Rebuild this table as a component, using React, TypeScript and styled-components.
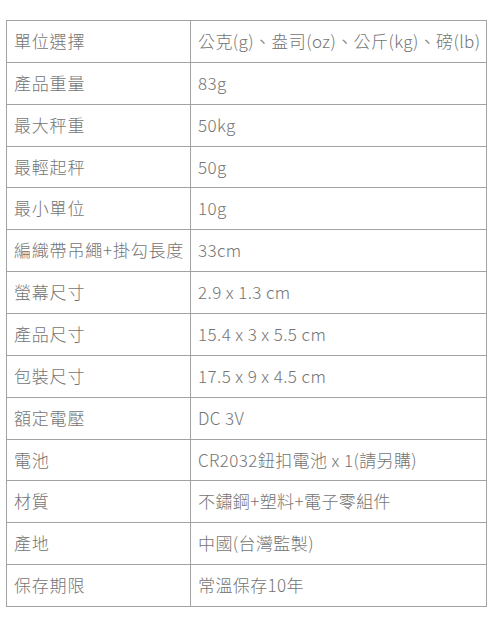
import React from 'react';
import styled, { createGlobalStyle } from 'styled-components';

const GlobalStyle = createGlobalStyle`
  html, body {
    margin: 0;
    padding: 0;
    background: #fff;
  }
  body {
    font-family: "Noto Sans CJK TC", "Noto Sans", sans-serif;
  }
`;

type Spec = { label: string; value: string };

const specs: Spec[] = [
  { label: '單位選擇', value: '公克(g)、盎司(oz)、公斤(kg)、磅(lb)' },
  { label: '產品重量', value: '83g' },
  { label: '最大秤重', value: '50kg' },
  { label: '最輕起秤', value: '50g' },
  { label: '最小單位', value: '10g' },
  { label: '編織帶吊繩+掛勾長度', value: '33cm' },
  { label: '螢幕尺寸', value: '2.9 x 1.3 cm' },
  { label: '產品尺寸', value: '15.4 x 3 x 5.5 cm' },
  { label: '包裝尺寸', value: '17.5 x 9 x 4.5 cm' },
  { label: '額定電壓', value: 'DC 3V' },
  { label: '電池', value: 'CR2032鈕扣電池 x 1(請另購)' },
  { label: '材質', value: '不鏽鋼+塑料+電子零組件' },
  { label: '產地', value: '中國(台灣監製)' },
  { label: '保存期限', value: '常溫保存10年' },
];

const Page = styled.main`
  padding: 20px 0 12px 6px;
`;

const SpecTable = styled.table`
  width: 481px;
  border-collapse: collapse;
  table-layout: fixed;
  border: 1px solid #a3a3a3;
`;

const Cell = styled.td<{ $label?: boolean }>`
  border: 1px solid #a3a3a3;
  padding: 10px 0 10px 7px;
  width: ${({ $label }) => ($label ? '184px' : 'auto')};
  box-sizing: border-box;
  font-size: 17px;
  letter-spacing: ${({ $label }) => ($label ? '0.8px' : '0.4px')};
  line-height: 20.86px;
  font-weight: 300;
  color: #747474;
  white-space: nowrap;
  vertical-align: middle;
`;

export default function App() {
  return (
    <Page>
      <GlobalStyle />
      <SpecTable>
        <tbody>
          {specs.map((s) => (
            <tr key={s.label}>
              <Cell $label>{s.label}</Cell>
              <Cell>{s.value}</Cell>
            </tr>
          ))}
        </tbody>
      </SpecTable>
    </Page>
  );
}
